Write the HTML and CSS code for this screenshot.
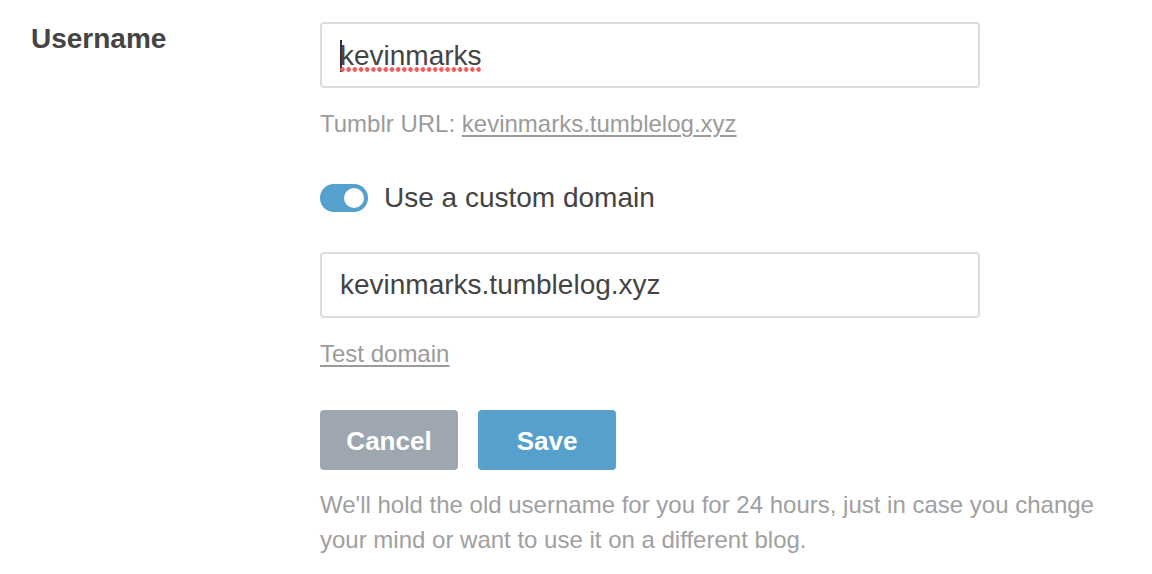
FILE: index.html
```html
<!DOCTYPE html>
<html lang="en">
<head>
<meta charset="utf-8">
<title>Username settings</title>
<link rel="stylesheet" href="styles.css">
</head>
<body>
<form class="setting">
  <div class="label">Username</div>
  <div class="controls">
    <div class="field"><span class="caret"></span><span class="misspelled">kevinmarks</span></div>
    <p class="hint">Tumblr URL: <a href="#">kevinmarks.tumblelog.xyz</a></p>
    <label class="toggle-row">
      <span class="toggle"><span class="knob"></span></span>
      <span class="toggle-text">Use a custom domain</span>
    </label>
    <div class="field field-domain">kevinmarks.tumblelog.xyz</div>
    <p class="hint test"><a href="#">Test domain</a></p>
    <div class="buttons">
      <button type="button" class="btn btn-cancel">Cancel</button>
      <button type="button" class="btn btn-save">Save</button>
    </div>
    <p class="note">We'll hold the old username for you for 24 hours, just in case you change your mind or want to use it on a different blog.</p>
  </div>
</form>
</body>
</html>
```
FILE: styles.css
```css
html, body {
  margin: 0;
  padding: 0;
  background: #ffffff;
}
body {
  font-family: "Liberation Sans", Arial, Helvetica, sans-serif;
  color: #444444;
}
.setting {
  display: grid;
  grid-template-columns: 320px 660px;
  padding-top: 22px;
}
.label {
  padding-left: 31px;
  margin-top: -1px;
  font-size: 28px;
  font-weight: bold;
  line-height: 36px;
  color: #444444;
}
.controls {
  display: flex;
  flex-direction: column;
  align-items: flex-start;
}
.field {
  box-sizing: border-box;
  width: 660px;
  height: 66px;
  border: 2px solid #dcdcdc;
  border-radius: 4px;
  padding: 0 18px;
  display: flex;
  align-items: center;
  font-size: 28px;
  color: #444444;
}
.caret {
  display: inline-block;
  width: 2px;
  height: 32px;
  background: #333333;
  margin-right: -2px;
  margin-top: 2px;
}
.misspelled {
  position: relative;
  padding-top: 2px;
}
.misspelled::after {
  content: "";
  position: absolute;
  left: 0;
  right: 0;
  bottom: 0;
  height: 5px;
  background-image: radial-gradient(circle at 2.5px 2.5px, #f25c5c 2px, transparent 2.6px);
  background-size: 6.2px 5px;
  background-repeat: repeat-x;
}
.hint {
  margin: 18px 0 0;
  font-size: 24px;
  line-height: 36px;
  color: #9b9b9b;
}
.hint a {
  color: #9b9b9b;
  text-decoration: underline;
  text-decoration-thickness: 2px;
  text-underline-offset: 3px;
}
.toggle-row {
  margin-top: 38px;
  display: flex;
  align-items: center;
  gap: 16px;
  height: 36px;
}
.toggle {
  box-sizing: border-box;
  width: 48px;
  height: 28px;
  border-radius: 14px;
  background: #56a0cd;
  display: flex;
  align-items: center;
  justify-content: flex-end;
  padding-right: 4px;
}
.knob {
  width: 20px;
  height: 20px;
  border-radius: 50%;
  background: #ffffff;
}
.toggle-text {
  font-size: 28px;
  line-height: 36px;
  color: #444444;
}
.field-domain {
  margin-top: 36px;
}
.buttons {
  margin-top: 38px;
  display: flex;
  gap: 20px;
}
.btn {
  width: 138px;
  height: 60px;
  border: 0;
  border-radius: 4px;
  font-family: inherit;
  font-size: 26px;
  font-weight: bold;
  color: #ffffff;
  padding: 2px 0 0;
}
.btn-cancel {
  background: #9ea6af;
}
.btn-save {
  background: #56a0cd;
}
.note {
  margin: 17px 0 0;
  width: 800px;
  font-size: 24px;
  line-height: 35px;
  color: #a0a0a0;
}
```
